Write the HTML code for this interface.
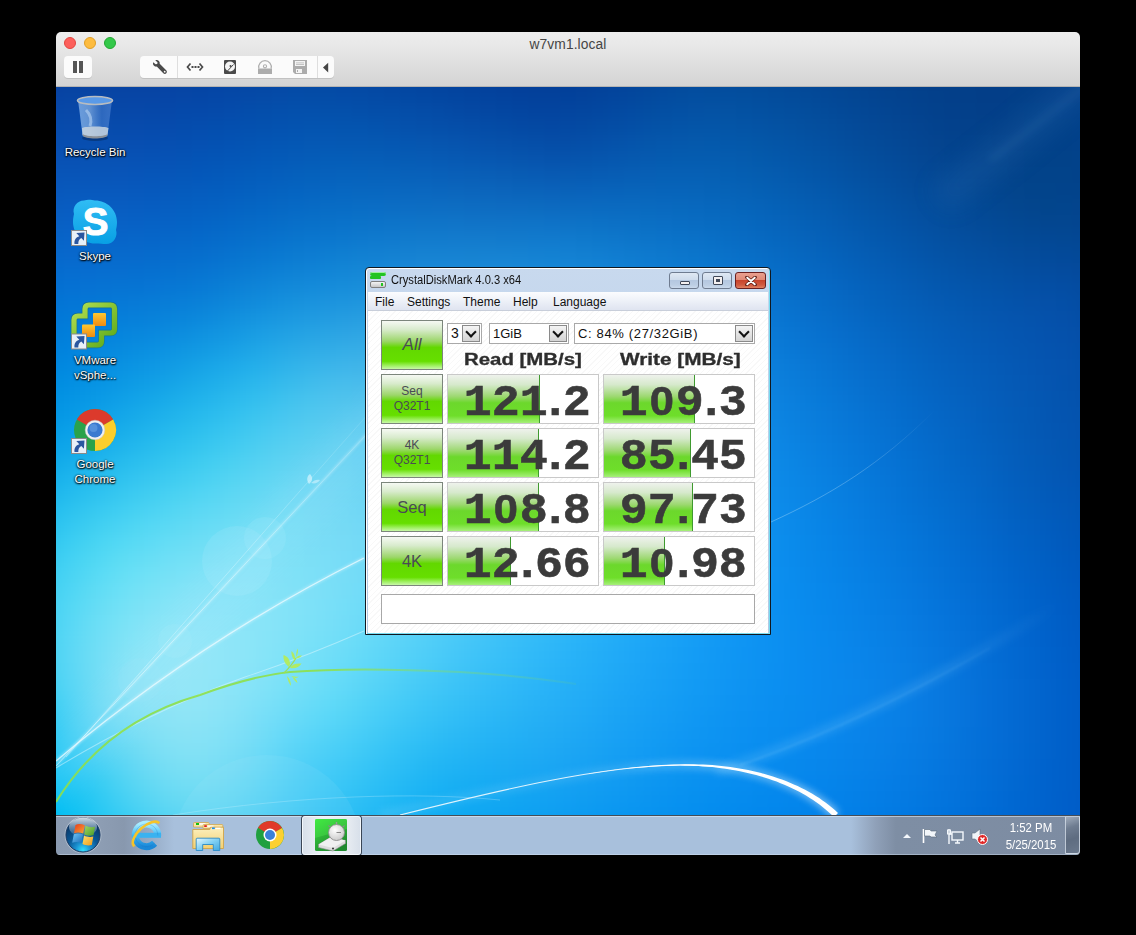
<!DOCTYPE html>
<html><head><meta charset="utf-8">
<style>
*{margin:0;padding:0;box-sizing:border-box}
html,body{width:1136px;height:935px;background:#000;overflow:hidden;font-family:"Liberation Sans",sans-serif}
.a{position:absolute}
#win{position:absolute;left:56px;top:32px;width:1024px;height:823px;border-radius:5px 5px 4px 4px;overflow:hidden;background:#000}
#tb{position:absolute;left:0;top:0;width:1024px;height:55px;background:linear-gradient(#ededed,#e8e8e8 25%,#d4d4d4 100%);border-bottom:1px solid #b4b4b4}
#title{position:absolute;left:0;width:1024px;top:5px;text-align:center;font-size:13.8px;color:#454545;letter-spacing:0.1px}
.light{position:absolute;top:5px;width:12px;height:12px;border-radius:50%}
.tbtn{position:absolute;top:24px;height:22px;background:#fbfbfb;border-radius:4px;box-shadow:0 1px 0 #c2c2c2}
#desk{position:absolute;left:0;top:55px;width:1024px;height:728px;overflow:hidden}
#taskbar{position:absolute;left:0;top:783px;width:1024px;height:40px}
/* CDM */
#cdm{position:absolute;left:365px;top:267px;width:406px;height:368px}
#cdmin{position:absolute;left:0;top:0;width:406px;height:368px;border:1px solid #101820;border-radius:4px 4px 0 0;
 box-shadow:inset 1px 1px 0 #fff,inset -1px -1px 0 #7adcf0;background:linear-gradient(#c8d9ee,#bdd1e9 40%,#b3c9e4)}
.wbtn{position:absolute;top:5px;height:17px;border:1px solid #6f7c90;border-radius:3px;background:linear-gradient(#dfe8f3,#cfdcec 45%,#b5c8e0 50%,#bccee4 80%,#cbdaec)}
#client{position:absolute;left:3px;top:44px;width:400px;height:322px;
 background:repeating-linear-gradient(135deg,#fff 0,#fff 3px,#f8f8f8 3px,#f8f8f8 4px)}
#menu{position:absolute;left:3px;top:25px;width:400px;height:19px;background:linear-gradient(#fbfcfe,#f0f3f9 40%,#dfe4f0);border-bottom:1px solid #c8ceda;font-size:12px;color:#101010}
#menu span{position:absolute;top:3px}
.gbtn{position:absolute;width:62px;height:50px;border:1px solid #7c867c;
 background:linear-gradient(#f6f9f3 0%,#d8ebcc 18%,#9cd66a 42%,#62d800 55%,#66df00 84%,#9ef060 93%,#c8f8a8 100%);
 color:#4a4a55;text-align:center;font-size:12px;line-height:15px}
.res{position:absolute;width:152px;height:50px;border:1px solid #c9c9c9;background:#fff;overflow:hidden}
.bar{position:absolute;left:0;top:0;height:48px;border-right:1px solid #3f9a2f;
 background:linear-gradient(#eef2ec 0%,#d6e9cc 20%,#9cd870 45%,#6cd82c 58%,#6ede2a 85%,#a6f07a 100%)}
.num{position:absolute;right:7px;top:1px;font-family:'Liberation Mono',monospace;font-weight:bold;font-size:44px;line-height:48px;color:#3b3b3b;transform:scaleX(1.06);transform-origin:right center;-webkit-text-stroke:0.6px #3b3b3b;white-space:nowrap}
.num i{font-style:normal;font-family:'Liberation Sans',sans-serif;margin:0 1px}
.num b{font-family:'Liberation Sans',sans-serif;font-size:41px;margin:0 1.8px;vertical-align:0}
.combo{position:absolute;top:56px;height:21px;border:1px solid #a9a9a9;background:#fff;font-size:13px;color:#111}
.combo .t{position:absolute;left:3px;top:2px;white-space:nowrap}
.combo .arr{position:absolute;right:1px;top:1px;width:18px;height:17px;background:linear-gradient(#f4f4f4,#d4d4d4);border:1px solid #8a8a8a}
.combo .arr:after{content:"";position:absolute;left:4px;top:2px;width:6px;height:6px;border-right:2px solid #111;border-bottom:2px solid #111;transform:rotate(45deg)}
.hdr{position:absolute;top:83px;font-weight:bold;font-size:16px;line-height:20px;color:#2d2d2d;transform:scaleX(1.275);transform-origin:left top;white-space:nowrap;-webkit-text-stroke:0.3px #2d2d2d}
/* icons */
.dlabel{position:absolute;width:90px;text-align:center;color:#fff;font-size:11.5px;line-height:15px;text-shadow:0 1px 2px #000,0 0 2px #000,1px 1px 1px rgba(0,0,0,.6)}
</style></head><body>
<div id="win">
  <div id="tb">
    <div id="title">w7vm1.local</div>
    <div class="light" style="left:8px;background:#fc605c;border:1px solid #e3463f"></div>
    <div class="light" style="left:28px;background:#fdbc40;border:1px solid #df9e27"></div>
    <div class="light" style="left:48px;background:#34c84a;border:1px solid #23a732"></div>
    <div class="tbtn" style="left:8px;width:28px">
      <div class="a" style="left:9px;top:5px;width:4px;height:12px;background:#555"></div>
      <div class="a" style="left:15px;top:5px;width:4px;height:12px;background:#555"></div>
    </div>
    <div class="tbtn" style="left:84px;width:194px">
      <svg class="a" style="left:0;top:0" width="194" height="22" viewBox="140 56 194 22">
        <rect x="177" y="56" width="1" height="22" fill="#dedede"/>
        <rect x="317" y="56" width="1" height="22" fill="#dedede"/>
        <!-- wrench -->
        <path d="M153.2 62.2 C152.4 64.6 154.2 67 156.8 66.6 L163.3 73.2 C164.2 74.1 165.6 74.1 166.3 73.2 C167.1 72.4 167.1 71.1 166.2 70.3 L159.7 63.8 C160.2 61.2 157.8 59.2 155.3 60.2 L157.6 62.4 L157.2 63.9 L155.6 64.3 Z" fill="#4a4a4a"/>
        <circle cx="164.7" cy="71.7" r="0.9" fill="#fbfbfb"/>
        <!-- <...> -->
        <path d="M190.5 63.5 L187.5 67 L190.5 70.5 M199.5 63.5 L202.5 67 L199.5 70.5" fill="none" stroke="#4a4a4a" stroke-width="1.7"/>
        <rect x="191.5" y="66" width="2" height="2" fill="#4a4a4a"/>
        <rect x="194.5" y="66" width="2" height="2" fill="#4a4a4a"/>
        <rect x="197.5" y="66" width="2" height="2" fill="#4a4a4a"/>
        <!-- hdd -->
        <rect x="224" y="60" width="12" height="14" rx="1" fill="#4a4a4a"/>
        <circle cx="230" cy="66.5" r="5" fill="#f4f4f4"/>
        <circle cx="230.5" cy="66" r="1" fill="#4a4a4a"/>
        <path d="M227 71.5 L233.5 64.5" stroke="#4a4a4a" stroke-width="1"/>
        <!-- cd -->
        <path d="M258.9 68.5 A6.3 6.3 0 1 1 271.1 68.5" fill="none" stroke="#b0b0b0" stroke-width="1.3"/>
        <circle cx="265" cy="66.3" r="1.6" fill="none" stroke="#b0b0b0" stroke-width="1.1"/>
        <rect x="258" y="68.5" width="14" height="5.5" fill="#acacac"/>
        <!-- floppy -->
        <path d="M293 60 H307 V74 H295 L293 72 Z" fill="#acacac"/>
        <rect x="295" y="61" width="10" height="5" fill="#f4f4f4"/>
        <rect x="296" y="62.5" width="8" height="0.8" fill="#b8b8b8"/>
        <rect x="296" y="64.2" width="8" height="0.8" fill="#b8b8b8"/>
        <rect x="296" y="69" width="6" height="4" fill="#f4f4f4"/>
        <rect x="297" y="70" width="1" height="2" fill="#acacac"/>
        <!-- arrow -->
        <path d="M328.2 62.8 V72.4 L323 67.6 Z" fill="#454545"/>
      </svg>
    </div>
  </div>
  <div id="desk"><div id="wpf" style="position:absolute;left:-32px;top:-32px;width:1088px;filter:blur(6px)"><div style="height:16px;background:linear-gradient(90deg,#053e9d,#063e9d,#063e9d,#073e9d,#073e9d,#073f9d,#073f9d,#073f9e,#073f9e,#063f9e,#06409e,#06409f,#05419f,#05419f,#05429f,#05439f,#05439f,#04449f,#04449f,#04439f,#04439e,#03429e,#03429d,#03419c,#03409b,#033f9a,#023e99,#023d98,#023c97,#023b96,#023b95,#023a95,#023a94,#023a94,#023b94,#023c94,#023d95,#023f95,#024096,#024296,#024497,#024597,#024698,#034797,#034797,#034797,#034796,#034695,#034594,#034492,#034391,#03428f,#03418e,#03408d,#033f8b,#033e8a,#033e89,#033d88,#033d87,#033c87,#033c86,#033c86,#033c86,#033d87,#033d87,#033d87,#033d87,#033c87,#043c86)"></div><div style="height:16px;background:linear-gradient(90deg,#0541a1,#0641a1,#0741a0,#0741a0,#0742a1,#0742a1,#0742a1,#0742a1,#0742a1,#0642a2,#0643a2,#0543a2,#0544a3,#0545a3,#0546a3,#0546a3,#0547a4,#0448a3,#0448a3,#0448a3,#0447a2,#0447a2,#0346a1,#0345a0,#03449f,#03439e,#03429d,#03419c,#02409b,#023f9a,#023e99,#023d98,#023d98,#023d97,#023e97,#023f98,#024098,#024299,#02449a,#02469a,#03479b,#03499b,#034a9c,#034a9b,#034b9b,#034a9a,#034a99,#034998,#034897,#034795,#034694,#034592,#034491,#03428f,#03418d,#03408c,#033f8a,#033e89,#033e88,#033e88,#033d87,#033d87,#033e87,#033e88,#033e88,#033e88,#033e88,#033e88,#033d87)"></div><div style="height:16px;background:linear-gradient(90deg,#0544a4,#0644a4,#0744a4,#0745a4,#0845a4,#0845a4,#0745a5,#0745a5,#0745a5,#0645a6,#0646a6,#0546a6,#0547a7,#0548a7,#0549a7,#054aa7,#054ba8,#044ca8,#044ca7,#044ca7,#044ba7,#044ba6,#044aa5,#0449a4,#0348a3,#0347a2,#0346a1,#0345a0,#03449f,#03439e,#03429d,#03419c,#03419b,#03419b,#02419b,#03429b,#03449c,#03459d,#03479d,#03499e,#034b9f,#034d9f,#034ea0,#034e9f,#034e9f,#034e9e,#034d9d,#034c9c,#034b9a,#034a99,#034897,#034795,#034693,#034491,#03438f,#03428e,#03418c,#03408b,#033f89,#033f89,#033e88,#033e88,#033f88,#033f88,#033f89,#033f89,#033f89,#033f89,#033e88)"></div><div style="height:16px;background:linear-gradient(90deg,#0547a8,#0647a8,#0748a8,#0848a8,#0848a8,#0848a8,#0748a8,#0748a9,#0648a9,#0648a9,#0549aa,#0549aa,#054aaa,#054bab,#044dab,#044eab,#044fac,#0450ac,#0450ac,#0450ab,#0450ab,#044faa,#044ea9,#044ea9,#044da8,#044ca7,#044ba6,#0449a4,#0448a3,#0447a2,#0346a1,#0345a0,#03449f,#03449f,#03459f,#03469f,#0347a0,#0349a1,#034ba2,#034da2,#034fa3,#0350a4,#0451a4,#0452a4,#0452a3,#0351a2,#0350a1,#034f9f,#034e9e,#034d9c,#034b9a,#034998,#034896,#034694,#034592,#034390,#03428e,#03418c,#03408b,#03408a,#033f89,#033f89,#034089,#024089,#024089,#02408a,#02408a,#034089,#033f89)"></div><div style="height:16px;background:linear-gradient(90deg,#054aac,#074bac,#074bac,#084bac,#084bac,#084bac,#074bac,#074bad,#064bad,#064bad,#054cad,#054dae,#044eae,#044faf,#0450af,#0451af,#0452b0,#0453b0,#0454b0,#0454b0,#0454af,#0454af,#0453ae,#0552ad,#0551ac,#0550ab,#054faa,#054ea9,#054da8,#044ca7,#044ba5,#0449a4,#0449a3,#0448a3,#0449a3,#044aa3,#044ca4,#044da5,#044fa6,#0451a7,#0453a7,#0454a8,#0455a8,#0455a8,#0455a7,#0454a6,#0453a5,#0452a3,#0451a1,#044f9f,#044e9d,#044c9b,#044a99,#044896,#044794,#044592,#044490,#03428e,#03418c,#03418b,#03418a,#034089,#034089,#024189,#024189,#024189,#02418a,#03408a,#034089)"></div><div style="height:16px;background:linear-gradient(90deg,#054db0,#074eb0,#074eb0,#084eb0,#084eb0,#084eb0,#084eb0,#074eb1,#064eb1,#064fb1,#054fb1,#0550b2,#0451b2,#0452b3,#0454b3,#0455b4,#0456b4,#0457b4,#0558b4,#0558b4,#0558b3,#0558b3,#0558b2,#0557b2,#0556b1,#0656b0,#0655af,#0654ae,#0652ad,#0651ab,#0650aa,#054fa9,#054ea8,#054da7,#054da7,#054fa8,#0550a9,#0552aa,#0554ab,#0556ab,#0557ac,#0558ac,#0559ac,#0459ac,#0458ab,#0458aa,#0457a8,#0455a7,#0454a5,#0452a3,#0450a1,#044e9e,#044c9c,#044b99,#044997,#044794,#044592,#04448f,#03438d,#03428c,#03428b,#03418a,#034189,#024189,#024189,#024189,#02418a,#02418a,#03408a)"></div><div style="height:16px;background:linear-gradient(90deg,#0551b4,#0751b4,#0851b4,#0851b4,#0852b4,#0852b4,#0852b4,#0752b5,#0652b5,#0652b5,#0553b5,#0454b6,#0455b6,#0456b7,#0457b7,#0459b8,#045ab8,#055bb8,#055cb8,#055db8,#055db8,#065db7,#065db7,#065cb6,#065cb5,#075bb5,#075ab4,#0759b3,#0758b2,#0757b1,#0756b0,#0755ae,#0754ae,#0653ad,#0653ad,#0655ad,#0656ae,#0657af,#0659af,#065ab0,#055bb0,#055cb0,#055cb0,#055cb0,#055caf,#055bae,#045aac,#0458ab,#0456a9,#0455a6,#0453a4,#0451a2,#044f9f,#044d9c,#044b9a,#044997,#044794,#044692,#03448f,#03438e,#03438c,#03438b,#03428a,#024289,#024289,#024289,#02428a,#02418a,#03418a)"></div><div style="height:16px;background:linear-gradient(90deg,#0554b8,#0754b8,#0855b8,#0855b8,#0855b8,#0855b8,#0855b9,#0755b9,#0656b9,#0656b9,#0557b9,#0457ba,#0459ba,#045abb,#045cbb,#045dbc,#055ebc,#0560bc,#0561bc,#0661bc,#0662bc,#0662bc,#0762bb,#0762bb,#0861ba,#0861ba,#0860b9,#095fb8,#095fb7,#095eb6,#095db5,#085cb4,#085bb4,#085ab3,#085bb3,#075bb3,#075cb4,#075db4,#075eb5,#075fb5,#0660b5,#0660b5,#0660b5,#0660b4,#055fb3,#055eb2,#055db0,#055baf,#0459ad,#0457aa,#0455a8,#0453a5,#0451a2,#044fa0,#044d9d,#044b9a,#044997,#044894,#034692,#034590,#03448e,#03448c,#03438b,#02438a,#02438a,#02438a,#02428a,#02428b,#03428b)"></div><div style="height:16px;background:linear-gradient(90deg,#0558bc,#0758bc,#0858bc,#0859bc,#0859bd,#0859bd,#0859bd,#0759bd,#0659bd,#065abd,#055bbd,#055cbe,#045dbe,#045ebf,#0460bf,#0561c0,#0563c0,#0564c1,#0665c1,#0666c1,#0767c1,#0867c0,#0867c0,#0967c0,#0967bf,#0a67bf,#0a66be,#0b66bd,#0b65bc,#0b65bc,#0b64bb,#0a63ba,#0a63ba,#0a62ba,#0962b9,#0962ba,#0963ba,#0863ba,#0864ba,#0864ba,#0764ba,#0764ba,#0764b9,#0663b8,#0663b7,#0661b6,#0560b4,#055eb3,#055cb0,#055aae,#0458ac,#0456a9,#0454a6,#0452a3,#0450a0,#044d9d,#044c9a,#044a98,#044895,#034792,#034690,#03458e,#03458c,#02448b,#02448b,#02438b,#02438b,#03438c,#03428c)"></div><div style="height:16px;background:linear-gradient(90deg,#055bc0,#075cc0,#085cc0,#085cc1,#085dc1,#085dc1,#085dc1,#075dc1,#065dc1,#065ec1,#055fc1,#0560c2,#0561c2,#0563c3,#0565c3,#0566c4,#0668c4,#0669c5,#076bc5,#086cc5,#086cc5,#096dc5,#0a6dc5,#0b6dc4,#0c6dc4,#0c6dc3,#0d6dc3,#0d6dc2,#0d6cc2,#0d6cc1,#0d6bc1,#0d6bc1,#0c6bc0,#0c6ac0,#0b6ac0,#0b6ac0,#0a6ac0,#0a6ac0,#0a6ac0,#096abf,#0969bf,#0869be,#0868be,#0767bd,#0766bc,#0665ba,#0663b9,#0561b7,#055fb5,#055db2,#055bb0,#0459ad,#0456aa,#0454a7,#0452a4,#0450a1,#044e9e,#044c9b,#044b98,#034996,#034893,#034791,#03468f,#03458d,#02458c,#02458d,#03448d,#03448e,#03438e)"></div><div style="height:16px;background:linear-gradient(90deg,#055fc4,#065fc4,#0860c4,#0860c5,#0861c5,#0861c5,#0861c5,#0761c5,#0662c5,#0662c5,#0563c5,#0564c6,#0566c6,#0568c7,#066ac7,#066bc8,#076dc8,#086fc9,#0870c9,#0971c9,#0a72ca,#0b73c9,#0c73c9,#0d74c9,#0e74c9,#0f74c8,#0f74c8,#1074c8,#1073c7,#1073c7,#1073c7,#0f73c7,#0f73c7,#0e72c7,#0e72c6,#0d72c6,#0c71c6,#0c70c5,#0b70c5,#0a6fc4,#0a6ec4,#096dc3,#096cc2,#086bc1,#076ac0,#0768bf,#0666bd,#0664bb,#0662b9,#0560b6,#055eb4,#055bb1,#0459ae,#0457ab,#0455a8,#0452a5,#0450a2,#044f9f,#044d9c,#044b99,#034a97,#034995,#034893,#034791,#034690,#034690,#034590,#034591,#034491)"></div><div style="height:16px;background:linear-gradient(90deg,#0463c7,#0663c8,#0764c8,#0864c9,#0865c9,#0865c9,#0765c9,#0766c9,#0666c9,#0667c9,#0668c9,#0569ca,#066bca,#066dcb,#076fcb,#0871cc,#0873cd,#0975cd,#0a76ce,#0b77ce,#0c78ce,#0e79ce,#0f7ace,#107ace,#117bcd,#127bcd,#127bcd,#137bcd,#137bcd,#137bcc,#127acc,#127acc,#117acd,#117acd,#107acd,#0f79cc,#0e78cb,#0e77cb,#0d75ca,#0c74c9,#0b73c9,#0a72c8,#0a71c7,#096fc6,#086dc4,#086bc3,#0769c1,#0667bf,#0665bd,#0663ba,#0560b8,#055eb5,#055cb2,#0459af,#0457ac,#0455a9,#0453a6,#0451a3,#044fa0,#044e9e,#044c9b,#034b99,#034a97,#034996,#034895,#034894,#034794,#034694,#034694)"></div><div style="height:16px;background:linear-gradient(90deg,#0366cb,#0567cb,#0768cc,#0868cc,#0869cc,#0769cc,#076acc,#076acc,#066bcc,#066ccd,#066dcd,#066ecd,#0770ce,#0773cf,#0875cf,#0977d0,#0a79d1,#0c7bd1,#0d7cd2,#0e7ed2,#0f7fd2,#1180d2,#1280d2,#1481d2,#1581d2,#1682d2,#1682d2,#1682d2,#1682d1,#1682d2,#1682d2,#1582d2,#1481d2,#1381d2,#1380d2,#127fd1,#117ed1,#107cd0,#0f7bcf,#0e79ce,#0d78cd,#0c76cc,#0b75cb,#0a73ca,#0971c9,#086fc7,#086dc5,#076ac3,#0668c1,#0666be,#0563bc,#0561b9,#055eb6,#055cb3,#045ab0,#0457ad,#0455aa,#0453a7,#0452a4,#0450a2,#044fa0,#044d9e,#044c9c,#044b9b,#034a9a,#034999,#034998,#034898,#034797)"></div><div style="height:16px;background:linear-gradient(90deg,#026ace,#046bcf,#056ccf,#066dd0,#076dd0,#076ed0,#076ed0,#066fd0,#0670d0,#0671d0,#0772d0,#0774d1,#0876d2,#0979d2,#0a7bd3,#0c7ed4,#0d80d5,#0f82d5,#1083d6,#1185d6,#1386d6,#1587d6,#1687d6,#1888d6,#1988d6,#1a89d6,#1a89d6,#1b89d6,#1a89d6,#1a89d6,#1989d6,#1988d7,#1888d7,#1687d7,#1587d7,#1485d6,#1384d5,#1282d4,#1180d4,#0f7ed3,#0e7cd2,#0d7bd1,#0c79cf,#0b77ce,#0a74cd,#0972cb,#0870c9,#076dc7,#076bc5,#0668c2,#0666c0,#0563bd,#0561ba,#055eb7,#055cb4,#045ab1,#0458ae,#0456ab,#0454a9,#0452a6,#0451a4,#0450a3,#044ea1,#044da0,#044c9f,#044b9e,#044a9d,#04499b,#04489a)"></div><div style="height:16px;background:linear-gradient(90deg,#006ed1,#026fd2,#0470d2,#0571d3,#0672d3,#0673d3,#0674d3,#0674d3,#0775d4,#0777d4,#0778d4,#087ad5,#097dd5,#0b80d6,#0d83d7,#0f85d8,#1188d9,#1389d9,#148bda,#168cda,#178dda,#198eda,#1b8fda,#1d8fda,#1e90da,#1f90da,#1f90da,#1f90da,#1f90da,#1e8fda,#1d8fdb,#1c8fdb,#1b8edb,#1a8ddb,#188cdb,#178bda,#1589da,#1487d9,#1385d8,#1183d7,#1081d6,#0f7fd5,#0d7cd3,#0c7ad2,#0b78d0,#0a75cf,#0973cd,#0870cb,#076ec9,#076bc6,#0669c4,#0666c1,#0563be,#0561bb,#055fb8,#055cb5,#055ab2,#0458af,#0456ad,#0455ab,#0453a9,#0452a7,#0450a6,#044fa5,#044ea4,#044da3,#044ca1,#044a9f,#04499d)"></div><div style="height:16px;background:linear-gradient(90deg,#0072d4,#0173d5,#0374d5,#0476d6,#0577d6,#0578d6,#0679d7,#077ad7,#077cd7,#087dd7,#097fd8,#0a81d8,#0c84d9,#0e87da,#108adb,#128ddc,#1590dd,#1792dd,#1a93de,#1c94de,#1d95de,#1f96de,#2196de,#2397de,#2497de,#2497de,#2497de,#2497de,#2396de,#2296de,#2195df,#2094df,#1e94df,#1d93df,#1b91de,#1a90de,#188edd,#168cdc,#1589dc,#1387db,#1185d9,#1083d8,#0f80d7,#0d7ed6,#0c7bd4,#0b78d2,#0a76d1,#0973cf,#0871cc,#076eca,#066bc7,#0669c4,#0666c1,#0563be,#0561bb,#055fb8,#055db6,#055ab3,#0459b1,#0457af,#0455ad,#0454ac,#0452aa,#0551a9,#0550a8,#044fa7,#044da4,#044ca2,#044aa0)"></div><div style="height:16px;background:linear-gradient(90deg,#0076d7,#0078d7,#0179d8,#037ad8,#047cd9,#057dd9,#067fda,#0780da,#0882da,#0984db,#0a86db,#0c89dc,#0e8cdd,#1190de,#1493df,#1796e0,#1a98e0,#1d9ae1,#209be1,#229ce1,#259de1,#279ee1,#289ee1,#299ee1,#2a9ee1,#2a9ee1,#2a9ee1,#299de2,#289ce2,#279ce2,#269be2,#249ae2,#2299e2,#2098e2,#1e96e2,#1c94e1,#1a92e1,#1990e0,#178edf,#158bde,#1389dd,#1186dc,#1084da,#0e81d9,#0d7ed7,#0c7bd6,#0a79d4,#0976d2,#0873d0,#0870cd,#076eca,#066bc8,#0668c5,#0566c2,#0563bf,#0561bc,#055fb9,#055db7,#055bb4,#0559b2,#0557b0,#0555af,#0554ae,#0553ac,#0551ab,#0550a9,#044ea7,#044da5,#044ba3)"></div><div style="height:16px;background:linear-gradient(90deg,#007ad9,#007cda,#007eda,#027fdb,#0481dc,#0583dc,#0685dd,#0887dd,#0989de,#0b8cde,#0d8edf,#0f92e0,#1295e1,#1498e2,#189ce3,#1c9fe4,#20a1e4,#23a3e4,#27a4e4,#2aa5e4,#2da5e4,#2fa6e4,#30a6e4,#31a6e4,#31a5e4,#31a5e4,#30a4e5,#2fa3e5,#2da2e5,#2ca2e5,#2aa0e5,#289fe5,#269ee5,#249ce5,#219ae5,#1f98e4,#1d96e4,#1b94e3,#1991e2,#178fe1,#158ce0,#138adf,#1187de,#0f84dc,#0e81db,#0c7ed9,#0b7cd7,#0a79d5,#0976d3,#0873d0,#0770ce,#076dcb,#066bc8,#0668c5,#0566c2,#0563bf,#0561bc,#055fba,#055cb8,#055bb5,#0559b3,#0557b2,#0555b0,#0554af,#0552ad,#0551ab,#054fa9,#044ea7,#044ca5)"></div><div style="height:16px;background:linear-gradient(90deg,#007fdb,#0081dc,#0082dd,#0284de,#0486de,#0689df,#078bdf,#098ee0,#0b91e1,#0d94e2,#1097e2,#129ae3,#159ee4,#19a1e6,#1da5e6,#21a8e7,#26aae7,#2babe7,#2fade7,#32ade7,#35aee7,#37aee7,#38ade7,#38ade7,#38ace7,#37abe7,#36aae7,#34a9e8,#33a8e8,#31a7e8,#2ea6e8,#2ca4e8,#29a2e8,#27a1e8,#249fe8,#229ce7,#1f9ae7,#1d98e6,#1b95e5,#1892e4,#1690e3,#148de2,#128ae0,#1087df,#0f84dd,#0d81dc,#0c7eda,#0a7bd8,#0978d5,#0875d3,#0873d0,#0770ce,#066dcb,#066ac8,#0668c5,#0565c2,#0563bf,#0560bd,#055eba,#055cb8,#055ab6,#0558b4,#0557b2,#0555b0,#0553af,#0552ad,#0450aa,#044fa8,#044da6)"></div><div style="height:16px;background:linear-gradient(90deg,#0084de,#0085de,#0087df,#028ae0,#048ce1,#078fe1,#0992e2,#0b95e3,#0e98e4,#119be4,#139fe5,#17a3e6,#1aa7e8,#1eaae9,#22aeea,#27b0ea,#2db2ea,#32b4ea,#37b5ea,#3bb5ea,#3eb5ea,#40b5e9,#40b5e9,#40b4ea,#3fb3ea,#3eb1ea,#3cb0ea,#3aafea,#38adea,#35acea,#33aaeb,#30a8eb,#2da7eb,#2aa5ea,#27a2ea,#25a0ea,#229ee9,#1f9be8,#1d98e8,#1a95e7,#1893e6,#1690e4,#138de3,#118ae2,#1087e0,#0e84de,#0c81dc,#0b7eda,#0a7bd8,#0978d6,#0875d3,#0772d0,#076fcd,#066ccb,#066ac8,#0567c5,#0565c2,#0562bf,#0560bd,#055eba,#055cb8,#055ab6,#0558b4,#0556b2,#0554b0,#0553ae,#0451ac,#044fa9,#044ea7)"></div><div style="height:16px;background:linear-gradient(90deg,#0088e0,#008ae1,#008de1,#038fe2,#0692e3,#0895e4,#0b98e4,#0e9ce5,#119fe6,#14a3e7,#18a7e8,#1babe9,#1fafea,#24b2eb,#29b6ec,#2eb8ed,#34baec,#3abbec,#40bcec,#44bdec,#47bdec,#48bcec,#48bbec,#48baec,#46b9ec,#44b7ec,#42b6ec,#3fb4ec,#3db2ed,#3ab0ed,#37afed,#34aded,#30abed,#2da8ed,#2aa6ec,#27a3ec,#24a1eb,#219eeb,#1e9bea,#1c98e9,#1995e8,#1792e7,#158fe5,#128ce4,#1089e2,#0f86e1,#0d83df,#0c80dd,#0a7dda,#097ad8,#0877d5,#0774d3,#0771d0,#066ecd,#066cca,#0569c7,#0566c4,#0564c2,#0561bf,#055fbc,#055dba,#055bb7,#0559b5,#0557b3,#0555b1,#0453ae,#0451ac,#0450aa,#044ea8)"></div><div style="height:16px;background:linear-gradient(90deg,#008de2,#008fe2,#0292e3,#0595e4,#0898e5,#0b9be6,#0f9fe7,#12a3e8,#15a7e8,#19abe9,#1dafea,#21b3eb,#26b6ec,#2bbaed,#30bdee,#36bfee,#3cc1ee,#43c2ee,#48c3ee,#4dc3ee,#4fc3ed,#50c2ed,#50c1ed,#4fc0ee,#4dbeee,#4abcee,#47baee,#44b9ee,#41b7ef,#3eb5ef,#3bb3ef,#37b0ef,#34aeef,#30acef,#2da9ee,#29a7ee,#26a4ed,#23a1ed,#209eec,#1d9beb,#1a98ea,#1895e9,#1592e8,#138fe6,#118be5,#0f88e3,#0e85e1,#0c82df,#0b7fdd,#097cda,#0879d8,#0876d5,#0773d2,#0670cf,#066dcd,#056bca,#0568c7,#0565c4,#0563c1,#0561be,#055ebb,#055cb9,#055ab6,#0458b4,#0456b1,#0454af,#0452ad,#0450ab,#044fa9)"></div><div style="height:16px;background:linear-gradient(90deg,#0093e4,#0195e4,#0497e5,#079ae6,#0b9ee7,#0fa2e8,#13a6e9,#17aae9,#1baeea,#1fb2eb,#23b6ec,#27baed,#2cbdee,#32c0ef,#38c3ef,#3ec5ef,#45c6f0,#4bc7ef,#50c8ef,#54c8ef,#57c8ef,#57c7ef,#56c6ef,#55c4ef,#53c3ef,#50c1f0,#4dbff0,#49bdf0,#46bbf0,#42b8f0,#3eb6f1,#3ab4f1,#36b1f0,#33aff0,#2facf0,#2ba9f0,#28a6ef,#25a4ef,#21a0ee,#1e9ded,#1c9aec,#1997eb,#1694ea,#1491e8,#128de7,#108ae5,#0e87e3,#0c84e1,#0b81df,#0a7edc,#097bda,#0878d7,#0775d5,#0672d2,#066fcf,#056ccc,#0569c9,#0567c6,#0564c3,#0562c0,#045fbd,#045dba,#045bb7,#0459b5,#0456b2,#0454b0,#0453ae,#0451ac,#034faa)"></div><div style="height:16px;background:linear-gradient(90deg,#0198e5,#049be6,#079de7,#0ba1e8,#0fa5e9,#14a9e9,#18adea,#1cb1eb,#21b5ec,#25b9ed,#29bded,#2ec0ee,#34c3ef,#3ac6f0,#40c8f0,#47caf1,#4dcbf1,#52ccf1,#57cdf0,#5bcdf0,#5dccf0,#5dcbf0,#5ccaf0,#5ac8f1,#58c7f1,#55c5f1,#51c3f1,#4dc0f2,#49bef2,#45bcf2,#41b9f2,#3db7f2,#39b4f2,#35b1f2,#31aff2,#2dacf1,#2aa9f1,#26a6f0,#23a3f0,#20a0ef,#1d9cee,#1a99ed,#1796eb,#1593ea,#128fe8,#108ce7,#0e89e5,#0d86e3,#0b82e1,#0a7fde,#097cdc,#0879d9,#0776d7,#0673d4,#0671d1,#056ece,#056bcb,#0568c8,#0566c5,#0463c2,#0460be,#045ebb,#045cb8,#0459b5,#0457b3,#0455b1,#0453af,#0351ad,#0350ab)"></div><div style="height:16px;background:linear-gradient(90deg,#059ee7,#08a1e8,#0ca4e9,#10a7e9,#15abea,#1ab0eb,#1fb4ec,#23b8ed,#28bced,#2cc0ee,#31c3ef,#36c6ef,#3cc9f0,#42cbf1,#48cdf1,#4fcef1,#55cff1,#5ad0f1,#5ed0f1,#61d0f1,#63d0f1,#63cff2,#61cdf2,#5fccf2,#5ccaf2,#59c8f2,#55c6f3,#51c3f3,#4cc1f3,#48bff3,#44bcf3,#3fb9f3,#3bb7f3,#37b4f3,#33b1f3,#2faef3,#2babf2,#27a8f2,#24a5f1,#20a1f0,#1d9eef,#1a9bee,#1898ed,#1594ec,#1391ea,#108ee8,#0f8ae7,#0d87e5,#0b84e3,#0a81e0,#097ede,#087bdb,#0778d9,#0675d6,#0672d3,#056fd0,#056ccd,#056aca,#0467c6,#0464c3,#0462c0,#045fbd,#045dba,#045ab7,#0458b4,#0356b1,#0354b0,#0352ae,#0350ac)"></div><div style="height:16px;background:linear-gradient(90deg,#09a4e9,#0da8ea,#12abea,#17afeb,#1cb3ec,#21b7ed,#26bbed,#2bbfee,#30c2ef,#35c6ef,#3ac9f0,#3fccf0,#45cef1,#4bd0f1,#51d1f2,#57d2f2,#5dd3f2,#61d3f2,#65d3f2,#67d3f2,#68d2f2,#67d1f3,#66d0f3,#63cff3,#60cdf3,#5ccbf4,#58c8f4,#54c6f4,#4fc4f4,#4ac1f4,#46bef5,#41bcf5,#3db9f5,#38b6f4,#34b3f4,#30b0f4,#2cadf4,#28aaf3,#25a6f2,#21a3f2,#1ea0f1,#1b9cf0,#1899ee,#1596ed,#1392ec,#118fea,#0f8ce8,#0d89e6,#0b86e4,#0a82e2,#097fe0,#087cdd,#0779da,#0676d8,#0673d5,#0571d2,#056ecf,#056bcb,#0468c8,#0465c5,#0463c2,#0460be,#045dbb,#035bb8,#0359b5,#0356b3,#0354b1,#0353af,#0251ad)"></div><div style="height:16px;background:linear-gradient(90deg,#0eabea,#13aeeb,#18b2ec,#1eb6ed,#23baed,#29beee,#2ec2ef,#34c5f0,#39c8f0,#3ecbf1,#43cef1,#48d0f2,#4ed2f2,#54d4f2,#59d5f3,#5fd6f3,#64d6f3,#68d6f3,#6bd6f3,#6dd5f3,#6dd5f3,#6bd4f3,#69d2f4,#66d1f4,#63cff4,#5fcdf5,#5acbf5,#56c8f5,#51c6f5,#4cc3f5,#47c0f6,#43bdf6,#3ebbf6,#39b8f6,#35b5f5,#31b1f5,#2daef5,#29abf4,#25a8f3,#22a4f3,#1ea1f2,#1b9ef1,#189af0,#1597ee,#1394ed,#1190eb,#0f8dea,#0d8ae8,#0b87e6,#0a84e4,#0981e1,#087edf,#077bdc,#0678d9,#0675d7,#0572d4,#056fd0,#046ccd,#0469ca,#0467c7,#0464c4,#0361c0,#035ebd,#035cba,#0359b7,#0357b5,#0255b3,#0253b1,#0251af)"></div><div style="height:16px;background:linear-gradient(90deg,#13b1ec,#19b4ed,#1fb8ed,#25bdee,#2bc1ef,#31c4f0,#37c8f0,#3dcbf1,#42cef1,#48d1f2,#4dd3f2,#52d5f3,#57d6f3,#5dd7f3,#62d8f3,#66d8f4,#6bd9f4,#6ed8f4,#70d8f4,#71d7f4,#70d7f4,#6fd6f4,#6cd4f5,#69d3f5,#65d1f5,#61cff5,#5cccf6,#57caf6,#52c7f6,#4dc5f6,#48c2f6,#44bff6,#3fbcf6,#3ab9f6,#36b6f6,#31b3f6,#2daff6,#29acf5,#25a9f4,#22a6f4,#1ea2f3,#1b9ff2,#189bf1,#1698f0,#1395ee,#1192ed,#0f8eeb,#0d8be9,#0b88e7,#0a85e5,#0982e3,#087fe0,#077cde,#0679db,#0676d8,#0573d5,#0570d2,#046dcf,#046bcc,#0468c9,#0365c5,#0362c2,#035fbf,#035dbc,#025ab9,#0258b7,#0256b5,#0254b3,#0152b1)"></div><div style="height:16px;background:linear-gradient(90deg,#19b6ed,#20baee,#26bfef,#2dc3ef,#34c7f0,#3acbf1,#40cef2,#46d1f2,#4cd3f3,#51d5f3,#57d7f3,#5cd8f4,#60d9f4,#65daf4,#69dbf4,#6ddbf4,#71dbf4,#73dbf4,#74daf4,#75d9f5,#73d9f5,#71d7f5,#6ed6f5,#6bd4f6,#66d2f6,#62d0f6,#5dcef6,#58cbf7,#53c9f7,#4ec6f7,#49c3f7,#44c0f7,#3fbdf7,#3abaf7,#36b7f7,#31b4f7,#2db0f6,#29adf6,#25aaf5,#22a6f5,#1ea3f4,#1ba0f3,#189cf2,#1599f1,#1396ef,#1193ee,#0e8fec,#0d8ceb,#0b89e9,#0a86e7,#0883e4,#0880e2,#077de0,#067add,#0677da,#0574d7,#0571d4,#046fd1,#046cce,#0469cb,#0366c8,#0363c4,#0260c1,#025ebe,#025bbc,#0259b9,#0157b7,#0155b4,#0153b2)"></div><div style="height:16px;background:linear-gradient(90deg,#1fbbee,#26c0ef,#2dc4f0,#35c9f1,#3ccdf1,#43d1f2,#4ad3f3,#50d6f3,#56d8f4,#5bd9f4,#60daf4,#65dbf5,#69dcf5,#6dddf5,#71ddf5,#74ddf5,#76ddf5,#77ddf5,#78dcf5,#77dbf5,#75daf5,#73d9f6,#6fd7f6,#6cd6f6,#67d4f6,#62d1f7,#5ecff7,#58ccf7,#53caf7,#4ec7f8,#49c4f8,#44c1f8,#3fbef8,#3abbf8,#36b8f8,#31b4f7,#2db1f7,#29aef6,#25aaf6,#22a7f5,#1ea4f5,#1ba0f4,#189df3,#159af2,#1397f0,#1093ef,#0e90ed,#0c8dec,#0b8aea,#0987e8,#0884e6,#0781e4,#077ee1,#067bde,#0678dc,#0576d9,#0573d6,#0470d3,#046dd0,#036acd,#0367ca,#0364c7,#0261c3,#025fc1,#015cbe,#015abb,#0157b9,#0155b6,#0053b4)"></div><div style="height:16px;background:linear-gradient(90deg,#24c0ef,#2cc4f0,#34c9f1,#3ccef2,#44d2f2,#4cd6f3,#53d8f4,#59daf4,#5fdbf5,#65ddf5,#69ddf5,#6edef5,#71dff6,#75dff6,#77dff6,#79dff6,#7adff6,#7bdef6,#7addf6,#79dcf6,#77dbf6,#74daf6,#70d8f6,#6cd6f7,#67d4f7,#62d2f7,#5dd0f7,#58cdf8,#53caf8,#4dc7f8,#48c4f8,#43c1f8,#3ebef8,#3abbf8,#35b8f8,#31b5f8,#2db1f7,#29aef7,#25abf7,#21a8f6,#1ea4f5,#1ba1f4,#189ef3,#159af2,#1297f1,#1094f0,#0e91ee,#0c8eed,#0a8beb,#0988e9,#0885e7,#0782e5,#077fe3,#067ce0,#067add,#0577db,#0574d8,#0471d5,#046ed2,#036bcf,#0368cc,#0265c9,#0262c6,#0160c3,#015dc0,#015abd,#0058bb,#0056b8,#0054b6)"></div><div style="height:16px;background:linear-gradient(90deg,#29c3f0,#32c8f1,#3bcdf2,#44d2f3,#4cd6f3,#54d9f4,#5cdcf4,#62ddf5,#68def5,#6edff6,#72e0f6,#76e0f6,#79e0f6,#7be1f6,#7de1f6,#7ee1f6,#7ee0f6,#7de0f6,#7cdff6,#7adef7,#77dcf7,#74dbf7,#70d9f7,#6bd7f7,#66d5f7,#61d2f8,#5cd0f8,#57cdf8,#52caf8,#4cc8f8,#47c5f8,#42c1f8,#3dbef8,#39bbf8,#34b8f8,#30b5f8,#2cb2f8,#28aef7,#24abf7,#21a8f6,#1da4f6,#1aa1f5,#179ef4,#159bf3,#1297f2,#1094f1,#0e91ef,#0c8eee,#0a8bec,#0988ea,#0886e8,#0783e6,#0780e4,#067de2,#067bdf,#0578dc,#0575d9,#0472d7,#046fd4,#036cd1,#0369ce,#0266cb,#0163c8,#0161c5,#005ec2,#005bbf,#0059bd,#0057ba,#0054b8)"></div><div style="height:16px;background:linear-gradient(90deg,#2dc6f1,#37cbf2,#41d0f3,#4ad4f3,#53d8f4,#5cdcf5,#64def5,#6be0f6,#71e1f6,#76e1f6,#7ae2f7,#7ee2f7,#80e2f7,#81e2f7,#82e2f7,#82e2f7,#81e1f7,#7fe1f7,#7de0f7,#7adef7,#77ddf7,#73dbf7,#6fd9f7,#6ad7f7,#65d5f8,#60d3f8,#5bd0f8,#55cdf8,#50caf8,#4bc7f8,#46c4f9,#41c1f9,#3cbef9,#37bbf9,#33b8f8,#2fb5f8,#2bb1f8,#27aef8,#23abf7,#20a8f7,#1da4f6,#1aa1f5,#179ef4,#149bf4,#1298f3,#0f95f1,#0d92f0,#0c8fef,#0a8ced,#0989eb,#0886ea,#0784e7,#0781e5,#067fe3,#067ce0,#0679de,#0576db,#0573d8,#0470d5,#036dd3,#036ad0,#0267cd,#0164ca,#0161c7,#005fc4,#005cc1,#0059bf,#0057bc,#0055ba)"></div><div style="height:16px;background:linear-gradient(90deg,#31c9f2,#3ccdf2,#46d2f3,#50d6f4,#5adaf4,#63ddf5,#6be0f6,#73e1f6,#79e2f6,#7ee3f7,#82e3f7,#84e3f7,#86e3f7,#86e3f7,#86e3f7,#85e3f7,#83e2f7,#81e1f7,#7ee0f7,#7adff7,#76ddf7,#72dcf8,#6ddaf8,#68d7f8,#63d5f8,#5ed2f8,#58d0f8,#53cdf8,#4ecaf8,#49c7f9,#44c4f9,#3fc1f9,#3abef9,#36bbf9,#31b7f9,#2db4f8,#2ab1f8,#26aef8,#23abf7,#1fa7f7,#1ca4f6,#19a1f6,#169ef5,#149bf4,#1198f3,#0f95f2,#0d92f1,#0b8fef,#0a8cee,#098aec,#0887eb,#0885e9,#0782e6,#0780e4,#067de2,#067adf,#0677dd,#0574da,#0471d7,#046ed4,#036bd1,#0268ce,#0165cc,#0062c9,#005fc6,#005dc3,#005ac1,#0058be,#0055bb)"></div><div style="height:16px;background:linear-gradient(90deg,#34caf2,#3fcff3,#4ad3f4,#55d8f4,#60dbf5,#6adef5,#72e1f6,#7ae2f6,#80e3f7,#84e4f7,#88e4f7,#8ae4f8,#8ae4f8,#8ae4f8,#89e4f8,#87e3f8,#84e3f8,#81e2f8,#7de1f8,#79dff8,#74def8,#70dcf8,#6bd9f8,#65d7f8,#60d4f8,#5bd2f8,#56cff8,#50ccf8,#4bc9f8,#46c6f9,#41c3f9,#3cc0f9,#38bdf9,#34baf9,#30b7f9,#2cb4f8,#28b1f8,#25adf8,#21aaf7,#1ea7f7,#1ba4f6,#19a1f6,#169ef5,#139bf4,#1198f3,#0f95f2,#0d92f1,#0b8ff0,#0a8def,#098aed,#0888eb,#0885ea,#0883e8,#0780e5,#077ee3,#077be1,#0678de,#0575db,#0572d9,#046fd6,#036cd3,#0269d0,#0166cd,#0063ca,#0060c8,#005dc5,#005bc2,#0058bf,#0056bd)"></div><div style="height:16px;background:linear-gradient(90deg,#35cbf3,#41d0f3,#4dd4f4,#59d8f5,#65dcf5,#6fdff6,#78e2f6,#80e3f7,#86e4f7,#8ae5f7,#8de5f8,#8ee5f8,#8ee5f8,#8de5f8,#8ae4f8,#88e4f8,#84e3f8,#80e2f8,#7ce1f8,#77dff8,#72ddf8,#6ddbf8,#68d9f8,#62d6f8,#5dd4f8,#57d1f8,#52cef8,#4dcbf8,#48c8f8,#43c5f8,#3ec2f8,#3abff8,#36bcf8,#31b9f8,#2eb6f8,#2ab3f8,#27b0f8,#23adf8,#20a9f7,#1da6f7,#1ba3f6,#18a0f6,#159df5,#139bf4,#1198f3,#0f95f3,#0d92f2,#0c90f0,#0a8def,#098bee,#0988ec,#0886ea,#0884e8,#0881e6,#087fe4,#077ce2,#0779df,#0676dd,#0573da,#0470d7,#036dd4,#026ad1,#0167cf,#0164cc,#0061c9,#005ec6,#005bc3,#0059c1,#0056be)"></div><div style="height:16px;background:linear-gradient(90deg,#36cbf3,#42d0f4,#4fd4f4,#5cd8f5,#68dcf5,#73dff6,#7de2f6,#84e4f7,#8ae5f7,#8ee6f7,#90e6f8,#91e6f8,#90e6f8,#8ee5f8,#8be5f8,#87e4f8,#83e3f8,#7ee2f8,#79e1f8,#74dff8,#6fddf8,#69dbf8,#64d8f8,#5ed5f8,#59d2f8,#53cff8,#4eccf8,#49c9f8,#44c6f8,#40c3f8,#3bc0f8,#37bdf8,#33bbf8,#2fb8f8,#2bb5f8,#28b2f8,#25aff8,#22acf7,#1fa9f7,#1ca6f7,#1aa3f6,#17a0f6,#159df5,#139af4,#1097f4,#0f95f3,#0d92f2,#0c90f1,#0b8def,#0a8bee,#0989ed,#0987eb,#0984e9,#0882e7,#0880e5,#087de3,#077ae0,#0677de,#0674db,#0571d8,#046ed5,#036bd3,#0267d0,#0164cd,#0061ca,#005ec7,#005cc5,#0059c2,#0057bf)"></div><div style="height:16px;background:linear-gradient(90deg,#34cbf3,#42d0f4,#4fd4f4,#5dd8f5,#6adcf5,#76dff6,#80e2f6,#88e4f6,#8ee5f7,#91e6f7,#93e6f7,#93e6f8,#91e6f8,#8ee5f8,#8be5f8,#86e4f8,#81e3f8,#7ce1f8,#76e0f8,#71def8,#6bdcf8,#65daf8,#5fd7f8,#5ad4f8,#54d1f8,#4fcef8,#4acbf8,#45c7f8,#40c4f8,#3cc2f8,#38bff8,#34bcf8,#30b9f8,#2db6f8,#29b3f8,#26b0f7,#23adf7,#21aaf7,#1ea7f7,#1ba4f6,#19a2f6,#169ff5,#149cf5,#1299f4,#1097f3,#0e94f3,#0d92f2,#0c90f1,#0b8df0,#0a8bee,#0a89ed,#0987ec,#0985ea,#0983e8,#0980e6,#087ee4,#087be1,#0778df,#0675dc,#0572d9,#046ed6,#036bd3,#0268d1,#0165ce,#0062cb,#005fc8,#005cc5,#005ac3,#0057c0)"></div><div style="height:16px;background:linear-gradient(90deg,#32caf4,#3fcff4,#4ed3f4,#5cd7f5,#6adbf5,#77dff6,#82e1f6,#8ae4f6,#8fe5f7,#93e6f7,#94e6f7,#93e6f7,#91e6f8,#8de5f8,#89e4f8,#84e3f8,#7ee2f8,#78e1f8,#72dff8,#6cddf8,#66dbf8,#60d8f8,#5ad5f8,#55d2f8,#4fcff7,#4accf7,#45c8f7,#40c5f7,#3cc2f7,#38bff7,#35bdf7,#31baf7,#2eb7f7,#2ab4f7,#27b1f7,#24aff7,#22acf7,#1fa9f6,#1da6f6,#1aa3f6,#18a0f5,#159ef5,#139bf4,#1199f4,#1096f3,#0e94f2,#0d92f2,#0c8ff1,#0b8df0,#0a8bef,#0a89ed,#0a87ec,#0a85ea,#0983e9,#0981e7,#097fe4,#087ce2,#0779df,#0776dd,#0672da,#046fd7,#036cd4,#0268d1,#0165ce,#0162cc,#005fc9,#005dc6,#005ac3,#0058c1)"></div><div style="height:16px;background:linear-gradient(90deg,#2dc9f4,#3bcdf4,#4ad2f4,#59d6f5,#68daf5,#76ddf5,#82e1f6,#8ae3f6,#8fe4f6,#92e5f7,#93e6f7,#92e6f7,#8fe5f7,#8be4f8,#86e3f8,#80e2f8,#7ae1f8,#73dff8,#6ddef8,#67dcf8,#61d9f8,#5bd6f7,#55d3f7,#4fd0f7,#49ccf7,#44c9f7,#40c6f7,#3bc3f7,#38c0f7,#34bdf7,#31baf7,#2eb7f7,#2bb5f7,#28b2f7,#25aff6,#23adf6,#20aaf6,#1ea7f6,#1ba4f6,#19a2f5,#179ff5,#149df4,#129af4,#1198f3,#0f95f3,#0e93f2,#0c91f1,#0b8ff1,#0b8df0,#0a8bef,#0a89ed,#0a88ec,#0a86eb,#0a84e9,#0a81e7,#097fe5,#097ce3,#0879e0,#0776dd,#0673da,#056fd7,#046cd5,#0369d2,#0266cf,#0163cc,#0060c9,#005dc7,#005ac4,#0058c1)"></div><div style="height:16px;background:linear-gradient(90deg,#27c7f4,#35cbf4,#44d0f4,#53d4f5,#63d8f5,#72dcf5,#7edff5,#87e2f6,#8de3f6,#90e4f6,#91e5f6,#90e5f7,#8de4f7,#88e3f7,#82e2f8,#7ce0f8,#75dff8,#6eddf8,#67dbf8,#61daf8,#5bd7f7,#54d4f7,#4ed0f7,#49cdf7,#43caf7,#3ec6f7,#3ac3f6,#36c0f6,#33bdf6,#30baf6,#2db8f6,#2bb5f6,#28b2f6,#26b0f6,#24adf6,#21abf6,#1fa8f5,#1ca5f5,#1aa3f5,#17a0f5,#159ef4,#139bf4,#1199f3,#1097f3,#0e94f2,#0d92f2,#0c90f1,#0b8ef0,#0a8def,#0a8bee,#0a89ed,#0a87ec,#0a85eb,#0a84e9,#0a82e7,#097fe5,#097ce3,#0879e0,#0776dd,#0673db,#056fd8,#046cd5,#0369d2,#0266cf,#0163cc,#0060ca,#005dc7,#005bc4,#0058c2)"></div><div style="height:16px;background:linear-gradient(90deg,#1fc5f4,#2dc9f4,#3bcdf4,#4bd1f4,#5bd5f5,#6ad9f5,#77ddf5,#81e0f5,#87e2f5,#8be3f6,#8de4f6,#8ce4f6,#89e3f7,#84e2f7,#7ee0f7,#76def8,#6fdcf8,#67daf8,#60d9f8,#5ad7f8,#54d4f7,#4ed1f7,#48cdf7,#42caf7,#3dc6f6,#38c3f6,#34c0f6,#31bdf6,#2ebaf6,#2bb7f6,#29b5f5,#27b2f5,#25b0f5,#24adf5,#22abf5,#1fa9f5,#1da6f5,#1aa3f4,#18a1f4,#169ef4,#149cf4,#129af3,#1097f3,#0e95f2,#0d93f2,#0c91f1,#0b8ff1,#0a8ef0,#0a8cef,#0a8aee,#0989ed,#0987ec,#0985ea,#0983e9,#0981e7,#097fe5,#087ce3,#0879e0,#0776dd,#0673db,#056fd8,#046cd5,#0369d2,#0266cf,#0163cc,#0060ca,#005dc7,#005bc5,#0058c2)"></div><div style="height:16px;background:linear-gradient(90deg,#16c3f4,#23c6f4,#31caf4,#40cef4,#50d3f4,#5fd7f5,#6ddaf5,#78def5,#80e0f5,#85e2f5,#88e2f5,#87e2f6,#84e2f6,#7fe0f7,#79def7,#71dcf7,#68daf8,#60d7f8,#59d5f8,#53d3f7,#4dd0f7,#47cdf7,#41caf6,#3bc6f6,#36c3f6,#32c0f6,#2ebcf5,#2bb9f5,#28b7f5,#26b4f5,#25b2f5,#23b0f5,#22adf4,#21abf4,#1fa9f4,#1da6f4,#1ba4f4,#19a1f4,#169ff4,#149df3,#129af3,#1098f3,#0f96f2,#0d94f2,#0c92f1,#0b90f1,#0a8ef0,#0a8def,#098bef,#0989ee,#0988ed,#0986eb,#0984ea,#0982e8,#0980e7,#087ee5,#087be2,#0779e0,#0676dd,#0572da,#046fd8,#046cd5,#0369d2,#0266cf,#0163cc,#0060ca,#005dc7,#005bc5,#0058c3)"></div><div style="height:16px;background:linear-gradient(90deg,#0dc0f4,#19c4f4,#26c7f4,#35cbf4,#44cff4,#54d4f4,#62d8f4,#6edbf4,#78def4,#7ee0f5,#82e1f5,#82e1f5,#7fe0f6,#7adef6,#73dcf6,#6bdaf7,#62d7f7,#59d4f7,#52d2f7,#4ccff7,#46cdf7,#40caf6,#3ac6f6,#34c3f6,#2fbff5,#2bbcf5,#27b9f5,#25b6f5,#23b4f4,#21b1f4,#20aff4,#1fadf4,#1fabf4,#1ea8f4,#1ca6f3,#1ba4f3,#18a2f3,#169ff3,#149df3,#129bf3,#1099f2,#0e96f2,#0d94f2,#0c92f1,#0b91f1,#0a8ff0,#098def,#088cef,#088aee,#0888ed,#0887ec,#0885eb,#0883e9,#0882e8,#0880e6,#077de4,#077be2,#0678e0,#0675dd,#0572da,#046fd7,#036cd5,#0269d2,#0166cf,#0163cc,#0060ca,#005dc7,#005bc5,#0059c3)"></div><div style="height:16px;background:linear-gradient(90deg,#03bef3,#0ec1f4,#1ac4f4,#28c8f4,#38ccf4,#48d1f4,#57d5f4,#64d8f4,#6fdbf4,#76def4,#7bdff4,#7cdff5,#79def5,#74dcf5,#6ddaf6,#65d7f6,#5cd4f7,#53d1f7,#4ccef7,#45ccf7,#3fc9f6,#39c6f6,#33c3f6,#2ebff5,#29bcf5,#24b8f4,#21b5f4,#1fb3f4,#1db0f4,#1caef4,#1cacf3,#1baaf3,#1ba8f3,#1aa6f3,#19a4f3,#17a2f3,#16a0f2,#149df2,#129bf2,#1099f2,#0e97f2,#0d95f1,#0b93f1,#0a91f0,#098ff0,#088eef,#088cef,#078aee,#0789ed,#0787ec,#0786eb,#0784ea,#0782e9,#0781e7,#077ee6,#067ce4,#067ae1,#0577df,#0574dd,#0471da,#036ed7,#036bd4,#0268d2,#0165cf,#0062cc,#0060ca,#005dc7,#005bc5,#0059c3)"></div><div style="height:16px;background:linear-gradient(90deg,#00bcf3,#05bef3,#10c1f3,#1dc5f3,#2dc9f4,#3dcef3,#4cd2f3,#5ad6f3,#65d9f3,#6ddbf4,#73ddf4,#74ddf4,#72dcf4,#6ddaf5,#66d7f5,#5ed5f6,#56d2f6,#4ecff6,#46ccf6,#40c9f6,#39c6f6,#33c3f5,#2dbff5,#28bcf5,#23b8f4,#1eb5f4,#1bb2f4,#19aff3,#18adf3,#17abf3,#17a9f3,#17a7f3,#16a5f2,#16a3f2,#15a1f2,#149ff2,#129df2,#119bf2,#0f99f1,#0d97f1,#0c95f1,#0a93f0,#0991f0,#088ff0,#078eef,#078cef,#068bee,#0689ed,#0688ed,#0586ec,#0585eb,#0583e9,#0581e8,#057fe7,#057de5,#057be3,#0579e1,#0476df,#0473dc,#0371da,#026ed7,#026bd4,#0168d1,#0065cf,#0062cc,#0060ca,#005dc7,#005bc5,#0059c3)"></div><div style="height:16px;background:linear-gradient(90deg,#00baf3,#00bcf3,#08bff3,#15c3f3,#24c7f3,#33cbf3,#42cff3,#4fd3f3,#5ad6f3,#63d8f3,#69daf3,#6bdaf3,#6ad9f4,#65d7f4,#5fd5f5,#58d2f5,#50cff6,#48ccf6,#41c9f6,#3ac6f6,#34c3f5,#2ebff5,#28bcf5,#22b9f4,#1db5f4,#19b2f3,#16aff3,#14adf3,#13aaf3,#13a9f2,#13a7f2,#12a5f2,#12a3f2,#12a1f2,#119ff2,#109df1,#0f9bf1,#0e99f1,#0c97f1,#0b95f0,#0993f0,#0891f0,#0790ef,#068eef,#058cee,#058bee,#0489ed,#0488ed,#0486ec,#0485eb,#0483ea,#0482e9,#0480e7,#047ee6,#047ce4,#047ae2,#0378e0,#0375de,#0373dc,#0270d9,#016dd7,#016ad4,#0067d1,#0065cf,#0062cc,#005fca,#005dc8,#005bc6,#0059c4)"></div><div style="height:16px;background:linear-gradient(90deg,#00b8f3,#00bbf3,#01bef3,#0ec1f3,#1bc5f3,#2ac9f3,#38ccf3,#44d0f3,#4fd3f3,#58d5f3,#5ed6f3,#61d7f3,#60d6f4,#5cd4f4,#57d2f4,#51cff5,#4accf5,#43c9f5,#3cc6f5,#35c3f5,#2ec0f5,#28bdf4,#23b9f4,#1db6f4,#19b2f3,#15aff3,#12adf3,#10aaf2,#0fa8f2,#0fa6f2,#0ea4f2,#0ea2f2,#0ea1f1,#0e9ff1,#0d9df1,#0c9bf1,#0b99f1,#0a97f0,#0995f0,#0894f0,#0792ef,#0690ef,#058eef,#048cee,#038bee,#0389ed,#0388ed,#0287ec,#0285eb,#0284ea,#0282e9,#0281e8,#027fe7,#027de5,#027be3,#0279e2,#0277e0,#0274dd,#0172db,#016fd9,#006cd6,#006ad4,#0067d1,#0064cf,#0062cc,#005fca,#005dc8,#005bc6,#0059c4)"></div><div style="height:16px;background:linear-gradient(90deg,#00b7f3,#00b9f3,#00bcf3,#07bff3,#14c3f3,#21c6f3,#2ecaf3,#3acdf3,#44cff3,#4dd1f3,#52d3f3,#55d3f3,#55d2f3,#52d1f4,#4ecff4,#49ccf4,#43caf4,#3cc7f5,#36c4f5,#2fc0f4,#29bdf4,#24baf4,#1eb7f4,#19b3f3,#15b0f3,#11adf3,#0eaaf2,#0da8f2,#0ba6f2,#0ba4f2,#0aa2f1,#0aa0f1,#0a9ef1,#0a9df1,#099bf1,#0999f0,#0897f0,#0795f0,#0694f0,#0592ef,#0490ef,#038eef,#038dee,#028bee,#018aed,#0188ed,#0187ec,#0185eb,#0184ea,#0182ea,#0181e8,#017fe7,#017ee6,#017ce4,#017ae3,#0078e1,#0076df,#0073dd,#0071db,#006ed8,#006cd6,#0069d4,#0067d1,#0064cf,#0062cd,#005fca,#005dc8,#005bc6,#0058c4)"></div></div><svg width="1024" height="728" viewBox="56 87 1024 728" style="position:absolute;left:0;top:0">
<defs>
 <radialGradient id="g0" gradientUnits="userSpaceOnUse" cx="320" cy="740" r="1000" gradientTransform="translate(320 740) scale(1.2 0.86) translate(-320 -740)">
  <stop offset="0" stop-color="#70dcfa"/>
  <stop offset="0.15" stop-color="#46c8f6"/>
  <stop offset="0.3" stop-color="#1ab2f0"/>
  <stop offset="0.45" stop-color="#0c94e4"/>
  <stop offset="0.6" stop-color="#0a6cc8"/>
  <stop offset="0.8" stop-color="#0652aa"/>
  <stop offset="1" stop-color="#04428f"/>
 </radialGradient>
 <radialGradient id="g1" gradientUnits="userSpaceOnUse" cx="560" cy="430" r="320">
  <stop offset="0" stop-color="#30b0f0" stop-opacity="0.45"/>
  <stop offset="1" stop-color="#30b0f0" stop-opacity="0"/>
 </radialGradient>
 <radialGradient id="g2" gradientUnits="userSpaceOnUse" cx="240" cy="610" r="220">
  <stop offset="0" stop-color="#a0ecff" stop-opacity="0.45"/>
  <stop offset="1" stop-color="#a0ecff" stop-opacity="0"/>
 </radialGradient>
 <linearGradient id="bandg" gradientUnits="userSpaceOnUse" x1="720" y1="770" x2="1060" y2="600"><stop offset="0" stop-color="#a0dcff" stop-opacity="1"/><stop offset="0.6" stop-color="#a0dcff" stop-opacity="0.8"/><stop offset="1" stop-color="#a0dcff" stop-opacity="0"/></linearGradient>
 <linearGradient id="lineg" gradientUnits="userSpaceOnUse" x1="771" y1="522" x2="935" y2="410"><stop offset="0" stop-color="#e8faff" stop-opacity="1"/><stop offset="0.5" stop-color="#e8faff" stop-opacity="0.8"/><stop offset="1" stop-color="#e8faff" stop-opacity="0"/></linearGradient>
 <radialGradient id="g3" gradientUnits="userSpaceOnUse" cx="960" cy="110" r="260">
  <stop offset="0" stop-color="#023a84" stop-opacity="0.45"/>
  <stop offset="1" stop-color="#023a84" stop-opacity="0"/>
 </radialGradient>
 <filter id="bl8" x="-50%" y="-50%" width="200%" height="200%"><feGaussianBlur stdDeviation="13"/></filter>
 <linearGradient id="vineg" gradientUnits="userSpaceOnUse" x1="56" y1="0" x2="580" y2="0"><stop offset="0" stop-color="#8ee04a"/><stop offset="0.5" stop-color="#8ee04a"/><stop offset="0.7" stop-color="#8ee04a" stop-opacity="0.45"/><stop offset="1" stop-color="#8ee04a" stop-opacity="0.1"/></linearGradient>
 <linearGradient id="lineA" gradientUnits="userSpaceOnUse" x1="56" y1="766" x2="380" y2="420"><stop offset="0" stop-color="#e8faff"/><stop offset="0.55" stop-color="#e8faff" stop-opacity="0.9"/><stop offset="1" stop-color="#e8faff" stop-opacity="0.25"/></linearGradient>
 <filter id="bl1" x="-50%" y="-50%" width="200%" height="200%"><feGaussianBlur stdDeviation="1.2"/></filter>
 <filter id="bl3" x="-50%" y="-50%" width="200%" height="200%"><feGaussianBlur stdDeviation="4"/></filter>
</defs>
<path d="M1120 50 C1080 90 1030 130 940 200" stroke="#4a8ac8" stroke-width="30" opacity="0.15" fill="none" filter="url(#bl8)"/>
<path d="M1100 75 C1060 105 1030 130 990 160" stroke="#6aa0d0" stroke-width="6" opacity="0.12" fill="none" filter="url(#bl3)"/>
<!-- bokeh -->
<g fill="#c8f4ff">
 <circle cx="237" cy="561" r="35" opacity="0.14"/>
 <circle cx="265" cy="538" r="21" opacity="0.12"/>
 <circle cx="175" cy="641" r="17" opacity="0.1"/>
 <circle cx="140" cy="680" r="22" opacity="0.06"/>
</g>
<circle cx="267" cy="850" r="95" fill="#c8f4ff" opacity="0.08"/>
<!-- lines left -->
<path d="M40 790 L300 510 L420 380" stroke="#b0ecff" stroke-width="46" opacity="0.13" fill="none" filter="url(#bl8)"/>
<g fill="none" stroke="#e8faff">
 <path d="M56 766 L305 500 L380 420" stroke-width="3" opacity="0.25" filter="url(#bl1)"/>
 <path d="M56 761 Q200 640 364 558" stroke-width="3.5" opacity="0.3" filter="url(#bl1)"/>
 <path d="M56 766 L305 500 L380 420" stroke="url(#lineA)" stroke-width="1" opacity="0.55"/>
 <path d="M66 757 L292 500 L370 412" stroke="url(#lineA)" stroke-width="1" opacity="0.4"/>
 <path d="M56 761 Q200 640 364 558" stroke-width="1.3" opacity="0.8"/>
 <path d="M56 768 C110 735 180 700 245 677 C290 662 330 646 364 631" stroke-width="1.1" opacity="0.45"/>
 <path d="M309 484 C306 480 307 476 310 474 C313 477 313 481 309 484 Z" fill="#e8faff" stroke="none" opacity="0.6"/>
 <path d="M311 483 C314 480 317 479 320 480 C318 483 315 484 311 483 Z" fill="#e8faff" stroke="none" opacity="0.5"/>
 <path d="M771 522 C830 495 880 465 935 410" stroke="url(#lineg)" stroke-width="1" opacity="0.3"/>
</g>
<path d="M56 802 C85 755 130 715 200 695 C235 682 262 675 290 672 C340 668 400 669 460 672 C510 675 550 680 576 684" fill="none" stroke="url(#vineg)" stroke-width="2" opacity="0.9"/>
<g fill="#b4ec5c" opacity="0.95">
 <path d="M284 673 C288 669 292 665 296 658" stroke="#a0e050" stroke-width="1.3" fill="none"/>
 <path d="M289 667 C285 664 283 660 283.5 655 C287 656 290 659 290 664 Z"/>
 <path d="M290 668 C292 664 296 663 301.5 663.5 C299.5 667 295 669 290 668 Z"/>
 <path d="M294 660 C292 657 291 654 291.5 651 C294 653 295.5 656 295 660 Z"/>
 <path d="M295.5 658.5 C297 656 299 655 302 655.5 C300.5 657.5 298.5 658.5 295.5 658.5 Z"/>
 <path d="M296 657 C296 654 296.5 651 297.5 648.5 C298.5 651 298 654 296 657 Z"/>
 <path d="M287 676 C287.5 680 289 683 291 686 C291 682 290 679 287 676 Z"/>
 <path d="M291 676 C294 676.5 297 677 299 676.5 C297 678.5 294.5 678.5 291 676 Z"/>
 <path d="M292.5 677 C294 680 295.5 682 297.5 683 C297 680 295.5 678 292.5 677 Z"/>
</g>
<!-- glow band -->
<path d="M720 770 C800 745 900 700 1000 640 C1030 622 1050 610 1070 596" fill="none" stroke="url(#bandg)" stroke-width="9" opacity="0.2" filter="url(#bl3)" stroke-linecap="round"/>
<path d="M740 765 C820 738 900 700 990 648" fill="none" stroke="url(#bandg)" stroke-width="2" opacity="0.15" filter="url(#bl1)"/>
<!-- big bottom arc -->
<path d="M380 815 C500 790 600 766 680 765 C740 764 800 780 836 815" fill="none" stroke="#d8f4ff" stroke-width="6" opacity="0.18" filter="url(#bl3)"/>
<path d="M400 815 C500 790 600 766 680 765 C740 764 800 780 836 815" fill="none" stroke="#fff" stroke-width="1.1" opacity="0.85"/>
<path d="M580.0 775.1 L587.0 774.0 L594.1 772.9 L601.1 771.9 L608.0 771.0 L614.9 770.1 L621.7 769.3 L628.4 768.6 L635.1 767.9 L641.8 767.4 L648.3 766.9 L654.8 766.5 L661.2 766.1 L667.6 765.9 L673.8 765.7 L680.0 765.6 L684.6 765.7 L689.2 765.7 L693.8 765.9 L698.4 766.1 L703.0 766.4 L707.5 766.7 L712.1 767.1 L716.6 767.6 L721.1 768.2 L725.6 768.8 L730.0 769.5 L734.5 770.2 L738.9 771.1 L743.2 772.0 L747.6 772.9 L751.8 774.0 L756.1 775.1 L760.3 776.2 L764.4 777.5 L768.5 778.8 L772.6 780.2 L776.6 781.6 L780.5 783.2 L784.4 784.8 L788.3 786.4 L792.0 788.2 L795.7 790.0 L799.3 791.8 L802.9 793.8 L806.4 795.8 L809.8 797.9 L813.1 800.0 L816.3 802.3 L819.5 804.6 L822.6 806.9 L825.6 809.4 L828.5 811.9 L831.3 814.4 L834.0 817.1 L838.0 812.9 L835.1 810.3 L832.1 807.7 L829.0 805.2 L825.8 802.7 L822.5 800.4 L819.2 798.1 L815.8 795.9 L812.3 793.8 L808.7 791.8 L805.1 789.8 L801.4 787.9 L797.6 786.1 L793.8 784.4 L789.9 782.7 L785.9 781.1 L781.9 779.6 L777.9 778.2 L773.7 776.8 L769.6 775.5 L765.4 774.3 L761.1 773.1 L756.9 772.0 L752.5 771.0 L748.2 770.1 L743.8 769.2 L739.4 768.4 L734.9 767.7 L730.4 767.0 L725.9 766.5 L721.4 765.9 L716.8 765.5 L712.3 765.1 L707.7 764.8 L703.1 764.6 L698.5 764.4 L693.9 764.3 L689.2 764.2 L684.6 764.3 L680.0 764.4 L673.8 764.5 L667.5 764.8 L661.2 765.1 L654.7 765.6 L648.3 766.1 L641.7 766.7 L635.1 767.3 L628.4 768.1 L621.6 768.9 L614.8 769.7 L608.0 770.7 L601.0 771.7 L594.1 772.8 L587.0 773.9 L580.0 775.1 Z" fill="#fff" opacity="0.7" filter="url(#bl3)"/>
<path d="M580.0 775.1 L587.0 774.0 L594.1 772.9 L601.1 771.9 L608.0 771.0 L614.9 770.1 L621.7 769.3 L628.4 768.6 L635.1 767.9 L641.8 767.4 L648.3 766.9 L654.8 766.5 L661.2 766.1 L667.6 765.9 L673.8 765.7 L680.0 765.6 L684.6 765.7 L689.2 765.7 L693.8 765.9 L698.4 766.1 L703.0 766.4 L707.5 766.7 L712.1 767.1 L716.6 767.6 L721.1 768.2 L725.6 768.8 L730.0 769.5 L734.5 770.2 L738.9 771.1 L743.2 772.0 L747.6 772.9 L751.8 774.0 L756.1 775.1 L760.3 776.2 L764.4 777.5 L768.5 778.8 L772.6 780.2 L776.6 781.6 L780.5 783.2 L784.4 784.8 L788.3 786.4 L792.0 788.2 L795.7 790.0 L799.3 791.8 L802.9 793.8 L806.4 795.8 L809.8 797.9 L813.1 800.0 L816.3 802.3 L819.5 804.6 L822.6 806.9 L825.6 809.4 L828.5 811.9 L831.3 814.4 L834.0 817.1 L838.0 812.9 L835.1 810.3 L832.1 807.7 L829.0 805.2 L825.8 802.7 L822.5 800.4 L819.2 798.1 L815.8 795.9 L812.3 793.8 L808.7 791.8 L805.1 789.8 L801.4 787.9 L797.6 786.1 L793.8 784.4 L789.9 782.7 L785.9 781.1 L781.9 779.6 L777.9 778.2 L773.7 776.8 L769.6 775.5 L765.4 774.3 L761.1 773.1 L756.9 772.0 L752.5 771.0 L748.2 770.1 L743.8 769.2 L739.4 768.4 L734.9 767.7 L730.4 767.0 L725.9 766.5 L721.4 765.9 L716.8 765.5 L712.3 765.1 L707.7 764.8 L703.1 764.6 L698.5 764.4 L693.9 764.3 L689.2 764.2 L684.6 764.3 L680.0 764.4 L673.8 764.5 L667.5 764.8 L661.2 765.1 L654.7 765.6 L648.3 766.1 L641.7 766.7 L635.1 767.3 L628.4 768.1 L621.6 768.9 L614.8 769.7 L608.0 770.7 L601.0 771.7 L594.1 772.8 L587.0 773.9 L580.0 775.1 Z" fill="#fff"/>
<path d="M173 815 C300 795 420 792 500 800" fill="none" stroke="#e0f8ff" stroke-width="1" opacity="0.25"/>
</svg></div>
  <div id="taskbar">
 <div class="a" style="left:0;top:0;width:1024px;height:40px;background:linear-gradient(90deg,#8a9ab0 0,#8e9eb4 40px,#8898ae 68px,#94a8c2 90px,#a8c0dc 118px,#a8c0dc 795px,#8fa0b8 820px,#7e8ea4 840px,#7d8ca2 1024px)"></div>
 <div class="a" style="left:0;top:0;width:1024px;height:1px;background:#454d58"></div>
 <div class="a" style="left:0;top:1px;width:1024px;height:1px;background:rgba(230,240,250,0.55)"></div>
 <div class="a" style="left:0;top:39px;width:1024px;height:1px;background:rgba(220,235,250,0.4)"></div>
 <!-- start orb -->
 <svg class="a" style="left:8px;top:1px" width="38" height="38" viewBox="-1 -1 38 38">
  <defs>
   <radialGradient id="orbg" cx="0.5" cy="0.95" r="0.75">
    <stop offset="0" stop-color="#30e0ff"/><stop offset="0.3" stop-color="#1a90d0"/><stop offset="0.6" stop-color="#0a5a98"/><stop offset="1" stop-color="#0a3e70"/>
   </radialGradient>
   <linearGradient id="orbh" x1="0" y1="0" x2="0" y2="1">
    <stop offset="0" stop-color="#e8eef4" stop-opacity="0.9"/><stop offset="1" stop-color="#a8bccc" stop-opacity="0.15"/>
   </linearGradient>
   <linearGradient id="fr" x1="0" y1="0" x2="1" y2="1"><stop offset="0" stop-color="#e83a1a"/><stop offset="1" stop-color="#f8a838"/></linearGradient>
   <linearGradient id="fg" x1="0" y1="0" x2="1" y2="1"><stop offset="0" stop-color="#a0d860"/><stop offset="1" stop-color="#4a9a2a"/></linearGradient>
   <linearGradient id="fb" x1="0" y1="0" x2="1" y2="1"><stop offset="0" stop-color="#70c8f8"/><stop offset="1" stop-color="#1a6ab8"/></linearGradient>
   <linearGradient id="fy" x1="0" y1="0" x2="1" y2="1"><stop offset="0" stop-color="#fce070"/><stop offset="1" stop-color="#f09a18"/></linearGradient>
  </defs>
  <circle cx="18" cy="18" r="18" fill="none" stroke="#c8d4e0" stroke-width="1" opacity="0.6"/>
  <circle cx="18" cy="18" r="17" fill="url(#orbg)" stroke="#1a3a64" stroke-width="1"/>
  <ellipse cx="18" cy="10" rx="14" ry="9.5" fill="url(#orbh)"/>
  <path d="M10.5 8 C13 6.5 16.5 6.8 19.8 8.2 L18.2 16.5 C15 15.2 12 15 9 16.2 Z" fill="url(#fr)"/>
  <path d="M20.5 8.8 C23.5 10.2 27 10.5 30 9.7 L28.5 18.2 C25.5 19 22.5 18.8 19.2 17.4 Z" fill="url(#fg)"/>
  <path d="M8.8 17.3 C12 16.1 15 16.3 18 17.6 L16.5 26 C13.5 24.8 10.5 24.6 7.2 25.8 Z" fill="url(#fb)"/>
  <path d="M19 18.5 C22 20 25.5 20.3 28.3 19.5 L26.8 28 C23.8 28.8 20.8 28.6 17.5 27 Z" fill="url(#fy)"/>
 </svg>
 <!-- IE -->
 <svg class="a" style="left:72px;top:2px" width="36" height="36" viewBox="0 0 36 36">
  <defs><linearGradient id="ieg" x1="0" y1="0" x2="0" y2="1"><stop offset="0" stop-color="#a8ecff"/><stop offset="0.5" stop-color="#40b8f4"/><stop offset="1" stop-color="#1a88d8"/></linearGradient>
  <clipPath id="iec"><path d="M-2 37 L38 0 V-5 H-2 Z"/></clipPath></defs>
  <path d="M29.8 18.5 A11.3 11.3 0 1 0 26.6 26.2" stroke="url(#ieg)" stroke-width="7" fill="none"/>
  <rect x="7.5" y="15.8" width="25.5" height="5" fill="#3ab2f0"/>
  <path d="M29.8 18.5 A11.3 11.3 0 1 0 26.6 26.2" stroke="#1a70c0" stroke-width="0.5" fill="none" opacity="0.5" transform="translate(0 0)"/>
  <g clip-path="url(#iec)"><ellipse cx="18.5" cy="17.5" rx="17" ry="8" transform="rotate(-42 18.5 17.5)" fill="none" stroke="#f6c428" stroke-width="2.6"/></g>
 </svg>
 <!-- explorer folder -->
 <svg class="a" style="left:134px;top:4px" width="34" height="34" viewBox="189 819 34 34">
  <defs><linearGradient id="fold" x1="0" y1="0" x2="0" y2="1"><stop offset="0" stop-color="#fcf0c0"/><stop offset="1" stop-color="#f4d070"/></linearGradient>
  <linearGradient id="stand" x1="0" y1="0" x2="1" y2="1"><stop offset="0" stop-color="#e8f8ff"/><stop offset="0.5" stop-color="#80d0f4"/><stop offset="1" stop-color="#40a8e0"/></linearGradient></defs>
  <path d="M192.5 827 V823.5 Q192.5 822.5 193.5 822.5 H207.5 L208.5 824 V827 Z" fill="#f8e4a8" stroke="#d0a850" stroke-width="0.8"/>
  <rect x="195" y="823" width="3" height="2" fill="#10c010"/>
  <rect x="198.5" y="823.2" width="6" height="1.5" fill="#fff"/>
  <path d="M202 828.5 V825.5 Q202 824.5 203 824.5 H221 Q221.8 824.5 221.8 825.5 V828.5 Z" fill="#f8e4a8" stroke="#d0a850" stroke-width="0.8"/>
  <rect x="203.2" y="825.2" width="2.6" height="1.8" fill="#e02020"/>
  <rect x="206.5" y="825.5" width="6" height="1.4" fill="#fff"/>
  <path d="M191.8 848.5 V829.5 H208.8 L209.5 827.2 H222.5 V848.5 Z" fill="url(#fold)" stroke="#d0a448" stroke-width="0.9"/>
  <rect x="211" y="827.5" width="2.8" height="1.6" fill="#1a90f0"/>
  <rect x="214.5" y="827.7" width="5" height="1.3" fill="#fff"/>
  <path d="M195.2 850.5 V839 Q195.2 838.2 196 838.2 H218 Q218.8 838.2 218.8 839 V850.5 H212.3 V844.5 H201.7 V850.5 Z" fill="url(#stand)" stroke="#2a8ac8" stroke-width="0.9"/>
 </svg>
 <!-- chrome -->
 <svg class="a" style="left:199px;top:5px" width="30" height="30" viewBox="0 0 30 30">
  <circle cx="15" cy="15" r="14" fill="#20a040"/>
  <path d="M15 15 L3.0 7.8 A14 14 0 0 1 27.1 8 Z" fill="#e03a2a"/>
  <path d="M15 15 L27.1 8 A14 14 0 0 1 15 29 Z" fill="#fcd030"/>
  <circle cx="15" cy="15" r="6.5" fill="#fff"/>
  <circle cx="15" cy="15" r="5" fill="#3a80d8"/>
 </svg>
 <!-- CDM active button -->
 <div class="a" style="left:246px;top:1px;width:59px;height:39px;border:1px solid #f4f8fc;border-radius:3px;background:linear-gradient(90deg,#d8e0ea,#eef2f7 35%,#e6ebf1 80%,#d8e0ea);box-shadow:0 0 0 1px #3a4656"></div>
 <svg class="a" style="left:258px;top:3px" width="34" height="34" viewBox="314 818 34 34">
  <defs>
   <linearGradient id="cdg" x1="0" y1="0" x2="0.6" y2="1"><stop offset="0" stop-color="#3ae83a"/><stop offset="0.45" stop-color="#30b838"/><stop offset="1" stop-color="#1e8a2e"/></linearGradient>
   <radialGradient id="swg" cx="0.4" cy="0.35" r="0.7"><stop offset="0" stop-color="#ffffff"/><stop offset="1" stop-color="#c8c8c8"/></radialGradient>
  </defs>
  <rect x="315" y="819" width="32" height="32" rx="1.5" fill="url(#cdg)"/>
  <path d="M315 838 L347 829 V819 H315 Z" fill="#50f050" opacity="0.35"/>
  <path d="M318.5 844.5 L331 837 L345.5 840.5 L345.5 843.5 L333 851 L318.5 847.5 Z" fill="#dcdcdc" stroke="#8a8a8a" stroke-width="0.6"/>
  <path d="M318.5 844.5 L331 837 L345.5 840.5 L333 848 Z" fill="#f0f0f0"/>
  <circle cx="333" cy="848.5" r="1" fill="#303030"/>
  <circle cx="336.5" cy="832.5" r="8" fill="url(#swg)" stroke="#8c8c8c" stroke-width="0.9"/>
  <rect x="335.8" y="822" width="1.4" height="3" fill="#9a9a9a"/>
  <path d="M328.5 825.5 L330 827 M344.5 825.5 L343 827" stroke="#8a8a8a" stroke-width="1.2"/>
  <path d="M336.5 832.5 H341" stroke="#707070" stroke-width="0.8"/>
 </svg>
 <!-- tray -->
 <div class="a" style="left:847px;top:19px;width:0;height:0;border-left:4px solid transparent;border-right:4px solid transparent;border-bottom:4px solid #f4f8fc"></div>
 <svg class="a" style="left:866px;top:13px" width="17" height="16" viewBox="0 0 17 16">
  <path d="M1.5 1 V15" stroke="#fff" stroke-width="1.6"/>
  <path d="M2.5 1.5 H8 L9 3 H15 L13 7 L15 9 H9 L8 8 H2.5 Z" fill="#f2f6fa" stroke="#586878" stroke-width=".6"/>
 </svg>
 <svg class="a" style="left:891px;top:13px" width="17" height="17" viewBox="0 0 17 17">
  <rect x="5" y="4" width="11" height="8" fill="#7c8ca0" stroke="#f4f8fc" stroke-width="1.4"/>
  <path d="M8 15 H13 M10.5 12 V15" stroke="#f4f8fc" stroke-width="1.4"/>
  <path d="M2 1 V16 M2 6 H5" stroke="#f4f8fc" stroke-width="1.4"/>
  <rect x="0.5" y="2" width="3" height="4" fill="none" stroke="#f4f8fc" stroke-width="1"/>
 </svg>
 <svg class="a" style="left:915px;top:13px" width="17" height="17" viewBox="0 0 17 17">
  <path d="M1 5 H4 L9 1 V15 L4 11 H1 Z" fill="#f0f4f8" stroke="#607080" stroke-width=".6"/>
  <circle cx="11.5" cy="11.5" r="5" fill="#e02828" stroke="#fff" stroke-width="1"/>
  <path d="M9.5 9.5 L13.5 13.5 M13.5 9.5 L9.5 13.5" stroke="#fff" stroke-width="1.5"/>
 </svg>
 <div class="a" style="left:940px;top:5px;width:70px;text-align:center;color:#fff;font-size:12px;line-height:17px;transform:scaleX(0.95)">1:52 PM<br>5/25/2015</div>
 <div class="a" style="left:1009px;top:1px;width:15px;height:38px;background:linear-gradient(160deg,#a0acbc 0,#6e7c90 30%,#5e6c80 60%,#6a788c 100%);border:1px solid rgba(230,238,248,.7);border-radius:1px 1px 3px 1px"></div>
</div>
</div>

<!-- desktop icons -->
<svg class="a" style="left:56px;top:87px" width="100" height="420" viewBox="56 87 100 420">
 <defs>
  <linearGradient id="binb" x1="0" x2="1" y1="0" y2="0">
   <stop offset="0" stop-color="#8ab8ee" stop-opacity="0.75"/>
   <stop offset="0.35" stop-color="#a8cdf4" stop-opacity="0.55"/>
   <stop offset="0.7" stop-color="#5a8ed8" stop-opacity="0.45"/>
   <stop offset="1" stop-color="#4a80d0" stop-opacity="0.7"/>
  </linearGradient>
  <linearGradient id="skg" x1="0" x2="0" y1="0" y2="1">
   <stop offset="0" stop-color="#30bcf4"/><stop offset="1" stop-color="#08a0e4"/>
  </linearGradient>
  <linearGradient id="vmg" x1="0" x2="1" y1="0" y2="1">
   <stop offset="0" stop-color="#b4e050"/><stop offset="1" stop-color="#5aa818"/>
  </linearGradient>
  <linearGradient id="vmo" x1="0" x2="0" y1="0" y2="1">
   <stop offset="0" stop-color="#ffc830"/><stop offset="1" stop-color="#f08a10"/>
  </linearGradient>
  <g id="sc">
   <rect x="0" y="0" width="15" height="15" fill="#e8f0f8" stroke="#8a8a8a" stroke-width="1"/>
   <path d="M3 13.5 C2.5 9.5 4.5 6.8 7.8 5.8 L4.8 2.6 L13 2 L12.4 10.2 L9.8 7.6 C7.8 8.6 6.6 10.6 6.8 13.5 Z" fill="#2a56a0"/>
  </g>
 </defs>
 <!-- recycle bin -->
 <ellipse cx="95" cy="138" rx="13" ry="3" fill="#000" opacity="0.25"/>
 <path d="M78 100 L82.5 135 C83 138.5 107 138.5 107.5 135 L112 100 Z" fill="url(#binb)"/>
 <path d="M82 128 C86 126 104 126 108.5 128 L107.5 135 C107 138.5 83 138.5 82.5 135 Z" fill="#c8d4de" opacity="0.85"/>
 <path d="M82.6 134 C86 137 104 137 107.6 134 L107.4 135.5 C106 139.5 84 139.5 82.8 135.5Z" fill="#8a9098"/>
 <ellipse cx="95" cy="100.5" rx="17.5" ry="4" fill="#5a9ae8" stroke="#b8bcc0" stroke-width="1.6"/>
 <path d="M86 110 C90 114 92 120 90 126" stroke="#c8e0fa" stroke-width="3" fill="none" opacity="0.5"/>
 <!-- skype -->
 <path d="M84 200.5 C88 199 92 200 95 200.5 C107 200.5 117 210 117 222 C117 225 116.5 228 116 230 C118 236 114 244 106 244 C103 244 100 243.5 95 243.5 C83 243.5 73 234 73 222 C73 219 73.5 216 74 214 C72 207 77 200.5 84 200.5 Z" fill="url(#skg)"/>
 <text x="95.5" y="235" text-anchor="middle" font-family="Liberation Sans" font-weight="bold" font-size="38.5" fill="#fff" stroke="#fff" stroke-width="1">S</text>
 <use href="#sc" x="71.5" y="230.5"/>
 <!-- vmware -->
 <path d="M89 305 H110.5 Q114.5 305 114.5 309 V329 Q114.5 333 110.5 333 H101.5 V341 Q101.5 345 97.5 345 H78 Q74 345 74 341 V320 Q74 316 78 316 H85 V309 Q85 305 89 305 Z" fill="none" stroke="#2a5a20" stroke-width="6.5" opacity="0.35"/>
 <path d="M89 305 H110.5 Q114.5 305 114.5 309 V329 Q114.5 333 110.5 333 H101.5 V341 Q101.5 345 97.5 345 H78 Q74 345 74 341 V320 Q74 316 78 316 H85 V309 Q85 305 89 305 Z" fill="none" stroke="url(#vmg)" stroke-width="5.2"/>
 <rect x="93" y="313" width="13" height="13" rx="1" fill="url(#vmo)"/>
 <rect x="82" y="324.5" width="13" height="12.5" rx="1" fill="url(#vmo)"/>
 <use href="#sc" x="71.5" y="334"/>
 <!-- chrome -->
 <circle cx="95" cy="430" r="21" fill="#2aa24a"/>
 <path d="M95 430 L76.8 419.5 A21 21 0 0 1 113.2 419.5 Z" fill="#dc3a2c"/>
 <path d="M95 430 L113.2 419.5 A21 21 0 0 1 95 451 Z" fill="#fcce2c"/>
 <circle cx="95" cy="430" r="9.8" fill="#f0f0f0" stroke="#c8c8c8" stroke-width="0.5"/>
 <circle cx="95" cy="430" r="7.6" fill="#3a7ad0"/>
 <circle cx="93.5" cy="428" r="4" fill="#70a8e8" opacity="0.5"/>
 <use href="#sc" x="71.5" y="438.5"/>
</svg>
<div class="dlabel" style="left:50px;top:145px">Recycle Bin</div>
<div class="dlabel" style="left:50px;top:249px">Skype</div>
<div class="dlabel" style="left:50px;top:353px">VMware<br>vSphe...</div>
<div class="dlabel" style="left:50px;top:457px">Google<br>Chrome</div>
<div id="cdm">
  <div id="cdmin"></div>
  <div class="a" style="left:5px;top:5px;width:16px;height:4px;background:#22c422;border-radius:2px;box-shadow:inset 0 1px 0 #9ef09e"></div>
  <div class="a" style="left:5px;top:9px;width:11px;height:3px;background:#22c422;border-radius:1px"></div>
  <div class="a" style="left:5px;top:14px;width:16px;height:7px;background:linear-gradient(#f4f4f4,#c8c8c8);border:1px solid #808080;border-radius:2px"></div>
  <div class="a" style="left:16px;top:16px;width:2px;height:3px;background:#22c422"></div>
  <div class="a" style="left:26px;top:6px;font-size:12px;color:#111;transform:scaleX(0.93);transform-origin:left top;white-space:nowrap">CrystalDiskMark 4.0.3 x64</div>
  <div class="wbtn" style="left:304px;width:30px"><div class="a" style="left:10px;top:8px;width:10px;height:4px;background:#f4f0f0;border:1px solid #404858;border-radius:1px"></div></div>
  <div class="wbtn" style="left:337px;width:30px"><div class="a" style="left:10px;top:3px;width:10px;height:9px;background:#f4f0f0;border:1px solid #404858;border-radius:1px"><div class="a" style="left:2px;top:2px;width:4px;height:3px;background:#404858;border:1px solid #404858"></div></div></div>
  <div class="wbtn" style="left:370px;width:31px;background:linear-gradient(#eaa090,#e08a78 45%,#c8442c 50%,#d05a40 80%,#e08060);border-color:#6a2020"><svg class="a" style="left:9px;top:3px" width="12" height="10" viewBox="0 0 14 12"><path d="M2 1.5 L12 10.5 M12 1.5 L2 10.5" stroke="#5a1a10" stroke-width="4" stroke-linecap="round"/><path d="M2.5 2 L11.5 10 M11.5 2 L2.5 10" stroke="#fff" stroke-width="2.4" stroke-linecap="round"/></svg></div>
  <div id="client"></div>
  <div id="menu"><span style="left:7px">File</span><span style="left:39px">Settings</span><span style="left:95px">Theme</span><span style="left:145px">Help</span><span style="left:185px">Language</span></div>
  <div class="gbtn" style="left:16px;top:53px;font-size:17px;line-height:48px;font-style:italic">All</div>
  <div class="combo" style="left:82px;width:35px"><span class="t" style="font-size:14px;top:1px">3</span><div class="arr"></div></div>
  <div class="combo" style="left:124px;width:80px"><span class="t">1GiB</span><div class="arr"></div></div>
  <div class="combo" style="left:209px;width:181px"><span class="t" style="letter-spacing:0.65px">C: 84% (27/32GiB)</span><div class="arr"></div></div>
  <div class="hdr" style="left:99px">Read [MB/s]</div>
  <div class="hdr" style="left:255px;transform:scaleX(1.297)">Write [MB/s]</div>

  <div class="gbtn" style="left:16px;top:107px;padding-top:9px">Seq<br>Q32T1</div>
  <div class="res" style="left:82px;top:107px"><div class="bar" style="width:92px"></div><div class="num">121<i>.</i>2</div></div>
  <div class="res" style="left:238px;top:107px"><div class="bar" style="width:91px"></div><div class="num">1<b>0</b>9<i>.</i>3</div></div>

  <div class="gbtn" style="left:16px;top:161px;padding-top:9px">4K<br>Q32T1</div>
  <div class="res" style="left:82px;top:161px"><div class="bar" style="width:91px"></div><div class="num">114<i>.</i>2</div></div>
  <div class="res" style="left:238px;top:161px"><div class="bar" style="width:87px"></div><div class="num">85<i>.</i>45</div></div>

  <div class="gbtn" style="left:16px;top:215px;font-size:16.5px;line-height:48px">Seq</div>
  <div class="res" style="left:82px;top:215px"><div class="bar" style="width:91px"></div><div class="num">1<b>0</b>8<i>.</i>8</div></div>
  <div class="res" style="left:238px;top:215px"><div class="bar" style="width:89px"></div><div class="num">97<i>.</i>73</div></div>

  <div class="gbtn" style="left:16px;top:269px;font-size:16.5px;line-height:48px">4K</div>
  <div class="res" style="left:82px;top:269px"><div class="bar" style="width:63px"></div><div class="num">12<i>.</i>66</div></div>
  <div class="res" style="left:238px;top:269px"><div class="bar" style="width:61px"></div><div class="num">1<b>0</b><i>.</i>98</div></div>

  <div class="a" style="left:16px;top:327px;width:374px;height:30px;border:1px solid #a8a8a8;background:#fff"></div>
</div>
</body></html>
